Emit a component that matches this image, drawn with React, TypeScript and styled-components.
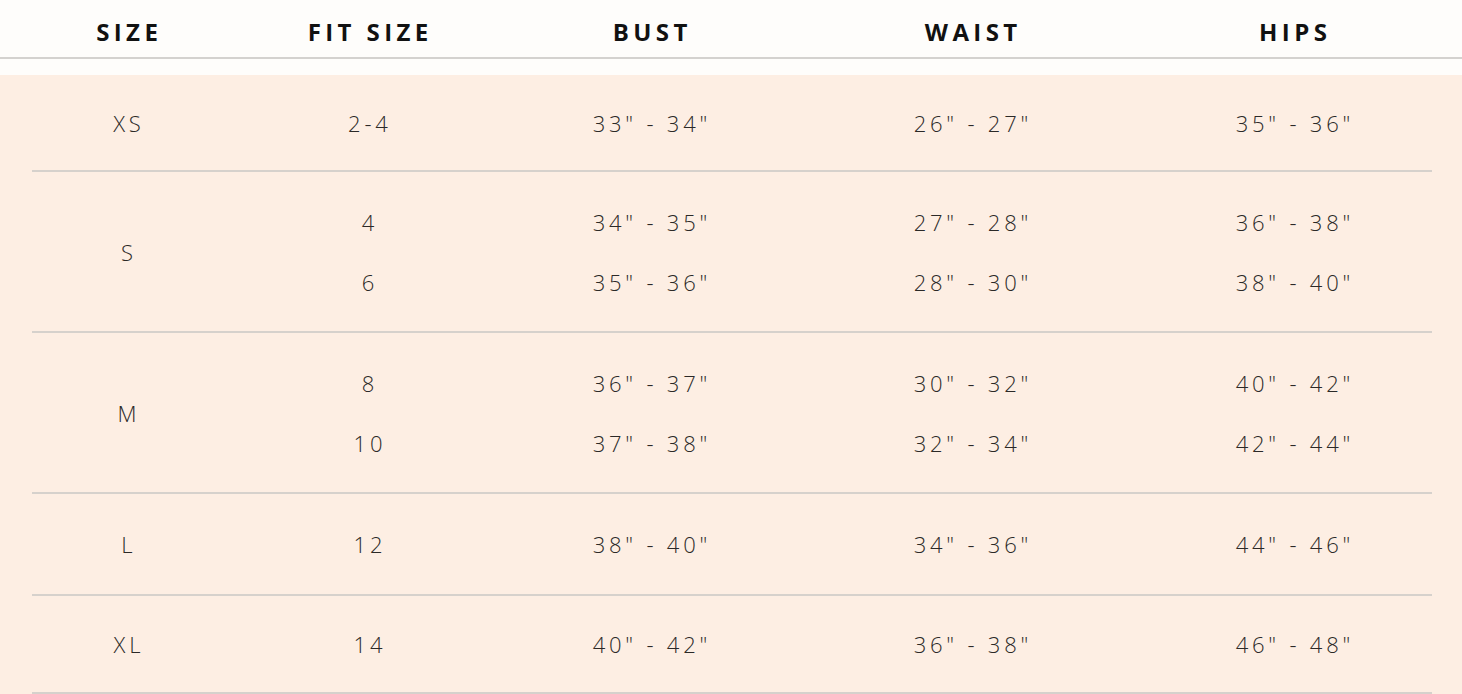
import React from "react";
import styled, { createGlobalStyle } from "styled-components";

const GlobalStyle = createGlobalStyle`
  html, body { margin: 0; padding: 0; background: #fefdfb; }
  body { font-family: "Open Sans", "Noto Sans", sans-serif; }
`;

const COLS = "190px 292px 272px 370px 274px";

const Page = styled.div`
  width: 1462px;
  height: 694px;
  overflow: hidden;
  background: #fefdfb;
`;

const HeaderBar = styled.div`
  display: grid;
  grid-template-columns: ${COLS};
  padding: 0 32px;
  height: 57px;
  align-items: center;
  border-bottom: 2px solid #d4d2cf;
  box-sizing: content-box;
`;

const HeadCell = styled.div`
  text-align: center;
  font-weight: 700;
  font-size: 24px;
  letter-spacing: 4.4px;
  color: #111111;
  padding-left: 4.4px;
  padding-top: 6px;
`;

const Body = styled.div`
  margin-top: 16px;
  background: #fdeee3;
  padding: 0 30px 0 32px;
  height: 700px;
`;

const Group = styled.div<{ $height: number }>`
  display: grid;
  grid-template-columns: ${COLS};
  align-items: center;
  border-bottom: 2px solid #d6d1cc;
  height: ${(p) => p.$height}px;
  box-sizing: content-box;
`;

const Cell = styled.div`
  text-align: center;
  font-size: 22px;
  font-weight: 300;
  letter-spacing: 3.8px;
  padding-left: 3.8px;
  color: #2b2927;
  display: flex;
  flex-direction: column;
  gap: 30px;
`;

type Row = { size: string; height: number; lines: string[][] };

const rows: Row[] = [
  { size: "XS", height: 95, lines: [["2-4", '33" - 34"', '26" - 27"', '35" - 36"']] },
  {
    size: "S",
    height: 159,
    lines: [
      ["4", '34" - 35"', '27" - 28"', '36" - 38"'],
      ["6", '35" - 36"', '28" - 30"', '38" - 40"'],
    ],
  },
  {
    size: "M",
    height: 159,
    lines: [
      ["8", '36" - 37"', '30" - 32"', '40" - 42"'],
      ["10", '37" - 38"', '32" - 34"', '42" - 44"'],
    ],
  },
  { size: "L", height: 100, lines: [["12", '38" - 40"', '34" - 36"', '44" - 46"']] },
  { size: "XL", height: 96, lines: [["14", '40" - 42"', '36" - 38"', '46" - 48"']] },
];

export default function App() {
  return (
    <Page>
      <GlobalStyle />
      <HeaderBar>
        {["SIZE", "FIT SIZE", "BUST", "WAIST", "HIPS"].map((h) => (
          <HeadCell key={h}>{h}</HeadCell>
        ))}
      </HeaderBar>
      <Body>
        {rows.map((r) => (
          <Group key={r.size} $height={r.height}>
            <Cell>{r.size}</Cell>
            {[0, 1, 2, 3].map((c) => (
              <Cell key={c}>
                {r.lines.map((l, j) => (
                  <span key={j}>{l[c]}</span>
                ))}
              </Cell>
            ))}
          </Group>
        ))}
      </Body>
    </Page>
  );
}
